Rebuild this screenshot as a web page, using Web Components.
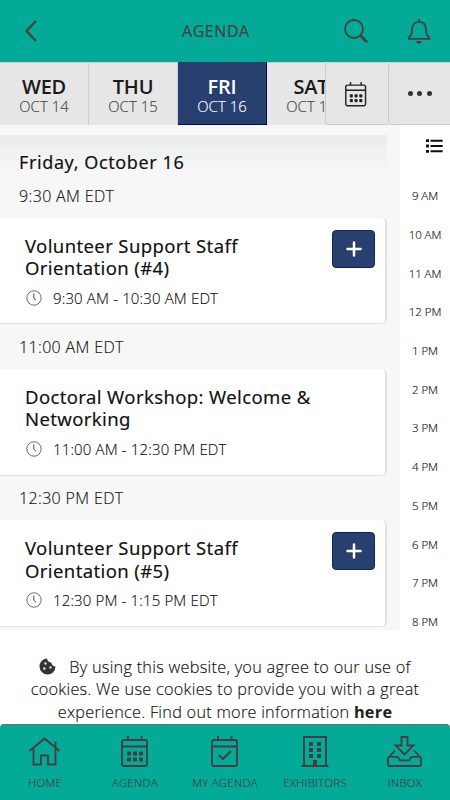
<!DOCTYPE html>
<html lang="en"><head><meta charset="utf-8"><title>Agenda</title>
<style>
html,body{margin:0;height:100%;overflow:hidden;background:#fff}
body{font-family:"Open Sans","Noto Sans",sans-serif;font-weight:300;color:#111;-webkit-text-stroke:.15px}
</style></head><body>
<agenda-app></agenda-app>
<script>
const define=(name,html,after)=>{
  const t=document.createElement('template');t.innerHTML=html;
  customElements.define(name,class extends HTMLElement{
    constructor(){super();this.attachShadow({mode:'open'}).append(t.content.cloneNode(true));}
    connectedCallback(){if(after)after(this,this.shadowRoot);}
  });
};
const cal=(inner)=>`<rect x="1" y="4" width="25" height="26" rx="2"/><path d="M1 10.500H26M7 0V4M20.500 0V4"/>${inner}`;
const dots='<g fill="currentColor" stroke="none"><rect x="6" y="15.500" width="4" height="4" rx="1"/><rect x="12" y="15.500" width="4" height="4" rx="1"/><rect x="18" y="15.500" width="4" height="4" rx="1"/><rect x="6" y="21.500" width="4" height="4" rx="1"/><rect x="12" y="21.500" width="4" height="4" rx="1"/><rect x="18" y="21.500" width="4" height="4" rx="1"/></g>';
const icons={
  back:[12,22,'<path d="M11 1 1.500 11 11 21" stroke-width="2.300"/>'],
  search:[24,24,'<circle cx="10" cy="10" r="9"/><path d="m16.500 16.500 6.700 6.700" stroke-width="2.700"/>'],
  bell:[22,25,'<path d="M.8 19.800V18.300C3 17 4 15.500 4 11C4 6 6.500 2.800 11 2.800S18 6 18 11C18 15.500 19 17 21.200 18.300V19.800ZM11 0V3"/><path d="M8 22H14Q13.500 24.700 11 24.700T8 22" fill="currentColor" stroke="none"/>'],
  calendar:[27,31,cal(dots)],
  check:[27,31,cal('<path d="m8 19 4 4 8-8" stroke-width="2"/>')],
  clock:[16,16,'<circle cx="8" cy="8" r="7.200" stroke-width=".8"/><path d="M7.800 3.500V8.200L10 10.300" stroke-width="1"/>'],
  list:[17,14,'<path d="M0 1.700H3M0 7H3M0 12.300H3" stroke-width="2.800"/><path d="M4.500 1.700H16.700M4.500 7H16.700M4.500 12.300H16.700" stroke-width="2"/>'],
  plus:[16,16,'<path d="M8 1.500V14.500M1.500 8H14.500" stroke-width="2.500" stroke-linecap="round"/>'],
  cookie:[17,17,'<path d="M8 .5C8.300 3 10 4.500 12.300 4.600C12.600 7 14 8.500 16.500 8.600A8 8 0 1 1 8 .5Z" fill="currentColor" stroke="none"/><g fill="#ddd" stroke="none"><circle cx="6.500" cy="5.500" r="1.200"/><circle cx="5.300" cy="10.500" r="1.300"/><circle cx="11.500" cy="9.500" r="1.200"/></g>'],
  home:[31,29,'<path d="M.5 14 15.500 1.500 30.500 14M4.500 11V27.500H12V18.500H19V27.500H26.500V11M26.500 10V4.500"/>'],
  building:[28,31,'<path d="M3 30V1H25V30M.5 30H27.500"/><g fill="currentColor" stroke="none"><path d="M8 6h4v4h-4zM16 6h4v4h-4zM8 12h4v4h-4zM16 12h4v4h-4zM8 18h4v4h-4zM16 18h4v4h-4zM12 24h4v6h-4z"/></g>'],
  inbox:[35,31,'<path d="M14.500 1H20.500V9.500H26.500L17.500 18.500 8.500 9.500H14.500ZM8 14.500 1 22V28Q1 30 3 30H32Q34 30 34 28V22L27 14.500M1 20.800H10.500L13 24.300H22L24.500 20.800H34"/>']
};
define('app-icon','<style>:host{display:inline-block;flex:none;line-height:0}svg{display:block;overflow:visible}</style><svg fill="none" stroke="currentColor" stroke-width="1.800"></svg>',(h,r)=>{
  const [w,hh,p]=icons[h.getAttribute('name')],s=r.querySelector('svg'),k=+(h.getAttribute('scale')||1);
  s.setAttribute('viewBox',`0 0 ${w} ${hh}`);s.setAttribute('width',w*k);s.setAttribute('height',hh*k);s.innerHTML=p;
});
define('top-bar',`<style>:host{display:grid;grid-template-columns:57px 1fr auto;align-items:center;height:62px;box-sizing:border-box;padding:0 20px 0 25px;background:#02aa97;color:#4b3f43}
h1{margin:0 0 0 100px;font-size:16px;font-weight:400;letter-spacing:.55px;-webkit-text-stroke:.2px}nav{display:flex;gap:40px;align-items:center}</style>
<app-icon name="back"></app-icon><h1><slot></slot></h1><nav><app-icon name="search"></app-icon><app-icon name="bell"></app-icon></nav>`);
define('day-tab',`<style>:host{display:flex;flex-direction:column;align-items:center;flex:0 0 89px;box-sizing:border-box;padding-top:13px;border-right:1px solid #d0d0d0;border-top:1px solid #ccc;white-space:nowrap;color:#444}
:host([active]){background:#28406f;color:#fff;border-color:#28406f #06064f #06064f;border-bottom:1px solid #06064f}
b{font-size:20px;line-height:22px;font-weight:600;color:#1a1a1a;letter-spacing:-.2px;-webkit-text-stroke:0}:host([active]) b{color:#fff}span{font-size:14.800px;line-height:16px;letter-spacing:.1px}</style><b><slot></slot></b><span><slot name="date"></slot></span>`);
define('day-bar',`<style>:host{display:flex;height:63px;background:#e6e6e6}.days{display:flex;flex:none;width:325px;overflow:hidden}.tool{display:flex;align-items:center;justify-content:center;flex:0 0 63px;border:1px solid #ccc;border-width:1px 0 1px 1px;border-radius:4px 0 0 4px;box-sizing:border-box;color:#222;padding-right:3px}.more{gap:4.500px;padding:0;flex:0 0 62px}i{width:5px;height:5px;border-radius:50%;background:#333}</style>
<div class="days"><slot></slot></div><div class="tool"><app-icon name="calendar" scale=".79" style="margin-top:1px"></app-icon></div><div class="tool more"><i></i><i></i><i></i></div>`);
define('time-heading',`<style>:host{display:flex;align-items:center;height:44.600px;padding-left:19px;font-size:16px;letter-spacing:.35px;white-space:nowrap}</style><slot></slot>`);
define('session-card',`<style>:host{display:flex;box-sizing:border-box;height:106.600px;margin-right:13px;background:#fff;border:solid #e2e2e2;border-width:0 2px 1.500px 0;border-radius:0 5px 5px 0;padding:16.900px 10px 0 25px;justify-content:space-between;align-items:flex-start}
h3{margin:0;font-size:18.500px;line-height:22.500px;font-weight:400;letter-spacing:.38px;font-family:"Noto Sans",sans-serif;white-space:nowrap}p{display:flex;align-items:center;gap:11px;margin:6px 0 0 1px;font-size:15px;line-height:24px;letter-spacing:.14px;white-space:nowrap}
app-icon{color:#444}button{display:none;width:43px;height:38px;margin:-5px 0 0;border:1px solid #142459;border-radius:4px;background:#28406f;color:#fff;padding:0;align-items:center;justify-content:center}:host([add]) button{display:flex}button app-icon{color:#fff}</style>
<div><h3><slot></slot></h3><p><app-icon name="clock"></app-icon><span><slot name="time"></slot></span></p></div><button aria-label="Add"><app-icon name="plus"></app-icon></button>`);
define('agenda-list',`<style>:host{display:block;width:400px;height:505px;background:#f7f7f7;padding-top:10px;box-sizing:border-box;overflow:hidden}h2{margin:0 13px 0 0;height:38.300px;box-sizing:border-box;padding:15px 0 0 19px;background:linear-gradient(#eaecec,#f7f7f7);font:400 18px/24px "Noto Sans",sans-serif;letter-spacing:.6px}</style><h2><slot name="date"></slot></h2><slot></slot>`);
define('hour-rail',`<style>:host{display:flex;flex-direction:column;align-items:center;width:50px;background:#fff}app-icon{align-self:flex-end;margin:14px 7px 23.300px 0}span{height:38.720px;flex:none;display:flex;align-items:center;font-size:11.500px;letter-spacing:-.05px;white-space:nowrap}</style><app-icon name="list"></app-icon>`,(h,r)=>{
  for(const t of h.getAttribute('hours').split(',')){const s=document.createElement('span');s.textContent=t;r.append(s);}
});
define('cookie-note',`<style>:host{display:block;height:94px;box-sizing:border-box;padding-top:25.500px;text-align:center;font-size:16.300px;line-height:22.500px;letter-spacing:.26px;background:#fff;white-space:nowrap}div{height:22.500px}.first{display:flex;justify-content:center;align-items:center;gap:13px}app-icon{color:#333}</style><div class="first"><app-icon name="cookie"></app-icon><slot name="a"></slot></div><div><slot name="b"></slot></div><div><slot name="c"></slot></div>`);
define('nav-item',`<style>:host{display:flex;flex:0 0 90px;flex-direction:column;align-items:center;box-sizing:border-box;font-size:11.500px;letter-spacing:.2px;line-height:16px;white-space:nowrap}.i{height:31px;margin:11px 1px 8px 0;display:flex;align-items:center}</style><div class="i"><slot name="icon"></slot></div><slot></slot>`);
define('nav-bar',`<style>:host{display:flex;height:76px;box-sizing:border-box;background:#02aa97;border-top:1px solid #766b6b;border-radius:4px 4px 0 0;color:#4b3a3f}</style><slot></slot>`);
define('agenda-app',`<style>:host{display:block;width:450px;height:800px;overflow:hidden}main{display:flex;height:505px;overflow:hidden}b{font-weight:700;color:#222;-webkit-text-stroke:0}</style>
<top-bar>AGENDA</top-bar>
<day-bar><day-tab>WED<span slot="date">OCT 14</span></day-tab><day-tab>THU<span slot="date">OCT 15</span></day-tab><day-tab active>FRI<span slot="date">OCT 16</span></day-tab><day-tab>SAT<span slot="date">OCT 17</span></day-tab></day-bar>
<main><agenda-list><span slot="date">Friday, October 16</span>
<time-heading>9:30 AM EDT</time-heading><session-card add>Volunteer Support Staff<br>Orientation (#4)<span slot="time">9:30 AM - 10:30 AM EDT</span></session-card>
<time-heading>11:00 AM EDT</time-heading><session-card>Doctoral Workshop: Welcome &amp;<br>Networking<span slot="time">11:00 AM - 12:30 PM EDT</span></session-card>
<time-heading>12:30 PM EDT</time-heading><session-card add>Volunteer Support Staff<br>Orientation (#5)<span slot="time">12:30 PM - 1:15 PM EDT</span></session-card></agenda-list>
<hour-rail hours="9 AM,10 AM,11 AM,12 PM,1 PM,2 PM,3 PM,4 PM,5 PM,6 PM,7 PM,8 PM"></hour-rail></main>
<cookie-note><span slot="a">By using this website, you agree to our use of</span><span slot="b">cookies. We use cookies to provide you with a great</span><span slot="c">experience. Find out more information <b>here</b></span></cookie-note>
<nav-bar><nav-item><app-icon slot="icon" name="home"></app-icon>HOME</nav-item><nav-item><app-icon slot="icon" name="calendar"></app-icon>AGENDA</nav-item><nav-item><app-icon slot="icon" name="check"></app-icon>MY AGENDA</nav-item><nav-item><app-icon slot="icon" name="building"></app-icon>EXHIBITORS</nav-item><nav-item><app-icon slot="icon" name="inbox"></app-icon>INBOX</nav-item></nav-bar>`);
</script></body></html>
